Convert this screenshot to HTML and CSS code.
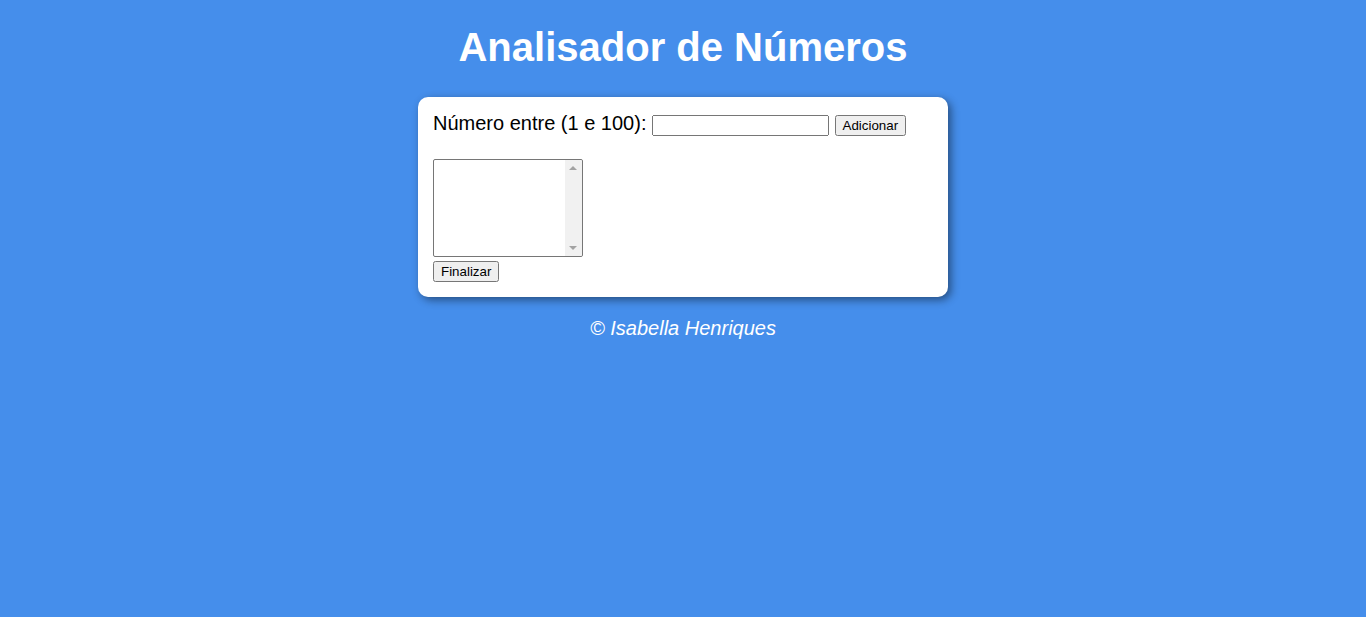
FILE: index.html
```html
<!DOCTYPE html>
<html lang="pt-br">
<head>
<meta charset="UTF-8">
<title>Analisador de Números</title>
<link rel="stylesheet" href="styles.css">
</head>
<body>
<header>
  <h1>Analisador de Números</h1>
</header>
<section>
  <div>
    <p class="entry">Número entre (1 e 100): <input type="number" id="fnum"> <input type="button" value="Adicionar"></p>
  </div>
  <div>
    <div class="list">
      <select id="flista" size="10"></select>
      <span class="scrollbar" aria-hidden="true"><span class="arrow up"></span><span class="arrow down"></span></span>
    </div>
    <input type="button" value="Finalizar">
  </div>
  <div id="res"></div>
</section>
<footer>
  <p>&copy; Isabella Henriques</p>
</footer>
</body>
</html>
```
FILE: styles.css
```css
body {
  background: rgb(69, 142, 235);
  font: normal 15pt "Liberation Sans", Arial, sans-serif;
}
header {
  color: white;
  text-align: center;
}
h1 {
  margin: 17px 0 27px;
}
section {
  background: white;
  border-radius: 10px;
  padding: 15px;
  width: 500px;
  margin: auto;
  box-shadow: 3px 3px 8px rgba(0, 0, 0, 0.45);
}
.entry {
  margin: 0 0 23px 0;
}
#fnum {
  width: 177px;
  box-sizing: border-box;
}
.list {
  position: relative;
  width: 150px;
  height: 98px;
  margin-bottom: 1px;
}
select {
  display: block;
  width: 150px;
  height: 98px;
  box-sizing: border-box;
  margin: 0;
}
.scrollbar {
  position: absolute;
  top: 1px;
  right: 1px;
  bottom: 1px;
  width: 17px;
  background: #f1f1f1;
  border-radius: 0 2px 2px 0;
}
.arrow {
  position: absolute;
  left: 4px;
  width: 0;
  height: 0;
  border-left: 4px solid transparent;
  border-right: 4px solid transparent;
}
.arrow.up {
  top: 6px;
  border-bottom: 4px solid #a3a3a3;
}
.arrow.down {
  bottom: 6px;
  border-top: 4px solid #a3a3a3;
}
footer {
  color: white;
  text-align: center;
  font-style: italic;
}
```
